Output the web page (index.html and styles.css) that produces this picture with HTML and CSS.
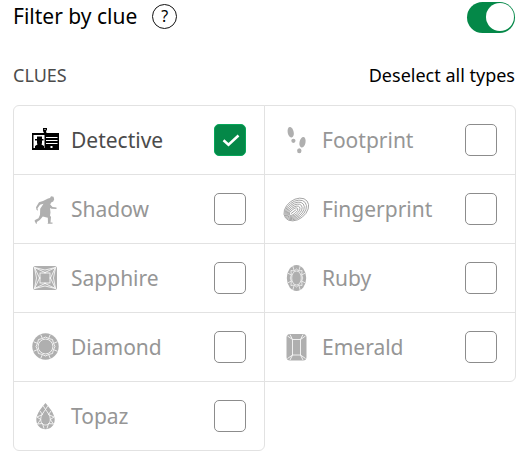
FILE: index.html
```html
<!DOCTYPE html>
<html lang="en">
<head>
<meta charset="utf-8">
<title>Filter by clue</title>
<link rel="stylesheet" href="styles.css">
</head>
<body>
<main class="panel">
  <header class="head">
    <span class="title">Filter by clue</span>
    <span class="help">?</span>
    <span class="switch"><span class="knob"></span></span>
  </header>
  <div class="subhead"><span class="caption">CLUES</span><span class="deselect">Deselect all types</span></div>
  <div class="clues">
    <label class="clue on">
      <svg class="icon" viewBox="0 0 32 32"><path d="M3 9h12L14 7V4h4v2l-1 1 .5 2H30v17H3z"/><g fill="#fff"><path d="M4.500 11h11v13h-11z"/><path d="M17 13h11.500v1H17zM17 16h11.500v1H17zM17 19h11.500v1H17zM21.500 22h2v2h-2zM15.500 5h1v1h-1z"/></g><path d="M8 12.500h5V15h1.500v1.500h-1.500v2.500l-.5 1.500 2.500 1.500v2.500H6V22l2.500-1.500L8 19v-2.500H6V15h2z"/></svg>
      <span class="name">Detective</span><span class="box"><svg viewBox="0 0 32 32"><path d="M9.500 16.200l5 4.500 10-9.200"/></svg></span>
    </label>
    <label class="clue">
      <svg class="icon" viewBox="0 0 32 32"><ellipse cx="10.700" cy="8.300" rx="3" ry="5.300" transform="rotate(-12 10.700 8.300)"/><circle cx="13.400" cy="16.800" r="2.100"/><ellipse cx="22.500" cy="18.300" rx="3" ry="5.300" transform="rotate(12 22.500 18.300)"/><ellipse cx="19.300" cy="26.700" rx="2.200" ry="2.500"/></svg>
      <span class="name">Footprint</span><span class="box"></span>
    </label>
    <label class="clue">
      <svg class="icon" viewBox="0 0 32 32"><path d="M19 5.500l2-.5 1-1.700 2.500.5.700 2.500-1 2.200-2 1-1 2 2.300 2.500 4 .5v1.500l-5-.2-1.500-.8.5 4.500-.5 3 1 1.500-.5 5.500h2v1.200h-5l.5-1-.2-5-5-1.200-3 3.500-3 2 .2 1.500-1 .2-1.500-3 1-1 3-1.500 1.500-3.500.2-6 3.300-5-3.500 1-2.500 3.500.5 2.500-1.500-1-.5-2.500 3-5 4-1.300z"/></svg>
      <span class="name">Shadow</span><span class="box"></span>
    </label>
    <label class="clue">
      <svg class="icon" viewBox="0 0 32 32"><g class="ridge" transform="translate(16.300 16.500) rotate(-38)"><ellipse rx="13.700" ry="9.700"/><ellipse cx="-.7" rx="12" ry="8.200"/><ellipse cx="-1.400" rx="10.300" ry="6.700"/><ellipse cx="-2.100" rx="8.600" ry="5.200"/><ellipse cx="-2.800" rx="6.900" ry="3.700"/><ellipse cx="-3.500" rx="5.200" ry="2.200"/><path d="M-7 0h7"/></g></svg>
      <span class="name">Fingerprint</span><span class="box"></span>
    </label>
    <label class="clue">
      <svg class="icon" viewBox="0 0 32 32"><rect x="4" y="4" width="24" height="24" rx="2.500"/><g class="cut"><rect x="11" y="11" width="10" height="10"/><path d="M5.500 5.500L11 17M5.500 5.500L17 11M26.500 5.500L21 17M26.500 5.500L15 11M5.500 26.500L11 15M5.500 26.500L17 21M26.500 26.500L21 15M26.500 26.500L15 21M5.500 5.500L16 8l10.500-2.500L24.500 16l2 10.500L16 24 5.500 26.500l2-10.500z"/></g></svg>
      <span class="name">Sapphire</span><span class="box"></span>
    </label>
    <label class="clue">
      <svg class="icon" viewBox="0 0 32 32"><ellipse cx="16.500" cy="16" rx="9.700" ry="13"/><g class="cut" transform="translate(16.500 16) scale(.74 1)"><ellipse rx="6.500" ry="7"/><path d="M-5-12l2 5 3-2 3 2 2-5M5 12l-2-5-3 2-3-2-2 5M-12-5l5 2-1.500 3L-7 3l-5 2M12-5L7-3l1.500 3L7 3l5 2M-3-7l-4.500-.5L-7-3M3-7l4.500-.5L7-3M-3 7l-4.500.5L-7 3M3 7l4.500.5L7 3"/></g></svg>
      <span class="name">Ruby</span><span class="box"></span>
    </label>
    <label class="clue">
      <svg class="icon" viewBox="0 0 32 32"><circle cx="16.500" cy="15.500" r="13.200"/><g class="cut" transform="translate(16.500 15.500)"><circle r="7.400"/><path d="M-4.800-12l1.700 4L0-9.500 3.100-8l1.700-4M4.800 12L3.100 8 0 9.500-3.100 8l-1.700 4M-12-4.800l4 1.700L-9.500 0-8 3.100l-4 1.700M12-4.800l-4 1.700L9.500 0 8 3.100l4 1.700M-3.100-8L-7-7l-1 3.900M3.100-8L7-7l1 3.900M-3.100 8L-7 7l-1-3.900M3.100 8L7 7l1-3.900"/></g></svg>
      <span class="name">Diamond</span><span class="box"></span>
    </label>
    <label class="clue">
      <svg class="icon" viewBox="0 0 32 32"><rect x="6.500" y="3" width="20" height="26.500" rx="3.500"/><g class="cut"><path d="M12.500 8.500h8v15.500h-8zM7.500 5l5 3.500M10 3.500l2.500 5M25.500 5l-5 3.500M23 3.500l-2.500 5M7.500 27.500l5-3.500M10 29l2.500-5M25.500 27.500l-5-3.500M23 29l-2.500-5"/></g></svg>
      <span class="name">Emerald</span><span class="box"></span>
    </label>
    <label class="clue">
      <svg class="icon" viewBox="0 0 32 32"><path d="M16.500 3c3 3.500 9.200 10.500 9.200 16.500 0 6-4.200 9.700-9.200 9.700s-9.200-3.700-9.200-9.700C7.300 13.500 13.500 6.500 16.500 3z"/><g class="cut"><path d="M16.500 9.500c2 3 4.800 6 4.800 9.500 0 4-2.300 6-4.800 6s-4.800-2-4.800-6c0-3.500 2.800-6.500 4.800-9.500zM14 5.500l2.500 4 2.500-4M11 11l2.500 3.500L8 17l3.700 2.500L8.500 24l5-.5 1.500 5M22 11l-2.500 3.500L25 17l-3.700 2.500 3.200 4.500-5-.5-1.500 5"/></g></svg>
      <span class="name">Topaz</span><span class="box"></span>
    </label>
  </div>
</main>
</body>
</html>
```
FILE: styles.css
```css
body {
  margin: 0;
  background: #fff;
  color: #000;
  font-family: "Noto Sans", sans-serif;
}
.panel {
  box-sizing: border-box;
  width: 516px;
  height: 458px;
  padding: 1px 0 0 13px;
}
.head {
  display: flex;
  align-items: center;
  height: 32px;
}
.title {
  font-size: 21px;
  line-height: 30px;
  margin-top: -2px;
}
.help {
  box-sizing: border-box;
  width: 25px;
  height: 25px;
  margin: -1px 0 0 15px;
  border: 1.500px solid #111;
  border-radius: 50%;
  font-size: 16px;
  line-height: 22px;
  text-align: center;
}
.switch {
  display: flex;
  justify-content: flex-end;
  box-sizing: border-box;
  width: 48px;
  height: 31px;
  margin: 0 1px 0 auto;
  padding: 1.500px;
  border-radius: 16px;
  background: #048848;
}
.knob {
  width: 28px;
  height: 28px;
  border-radius: 50%;
  background: #fff;
}
.subhead {
  display: flex;
  justify-content: space-between;
  align-items: center;
  height: 28px;
  margin: 28px 1px 16px 0;
  font-size: 18px;
}
.caption {
  color: #4b4b4b;
}
.clues {
  display: grid;
  grid-template-columns: 251px 251px;
  grid-auto-rows: 69px;
}
.clue {
  display: flex;
  align-items: center;
  box-sizing: border-box;
  margin: 0 -1px -1px 0;
  padding: 0 18px 0 15px;
  border: 1px solid #e2e2e2;
  color: #969696;
  font-size: 21px;
}
.clue:nth-child(1) { border-top-left-radius: 6px; }
.clue:nth-child(2) { border-top-right-radius: 6px; }
.clue:nth-child(8) { border-bottom-right-radius: 6px; }
.clue:nth-child(9) { border-radius: 0 0 6px 6px; }
.clue.on {
  color: #4b4b4b;
}
.icon {
  width: 32px;
  height: 32px;
  margin-right: 10px;
  fill: #afafaf;
}
.on .icon {
  fill: #000;
}
.cut {
  fill: none;
  stroke: #fff;
  stroke-width: 0.800;
}
.ridge {
  fill: none;
  stroke: #a4a4a4;
  stroke-width: 0.900;
}
.box {
  box-sizing: border-box;
  width: 32px;
  height: 32px;
  margin-left: auto;
  border: 1px solid #8c8c8c;
  border-radius: 5px;
}
.on .box {
  border-color: #06a75a;
  background: #048848;
}
.box svg {
  display: block;
  width: 32px;
  height: 32px;
  margin: -1px;
  fill: none;
  stroke: #fff;
  stroke-width: 2.500;
}
```
